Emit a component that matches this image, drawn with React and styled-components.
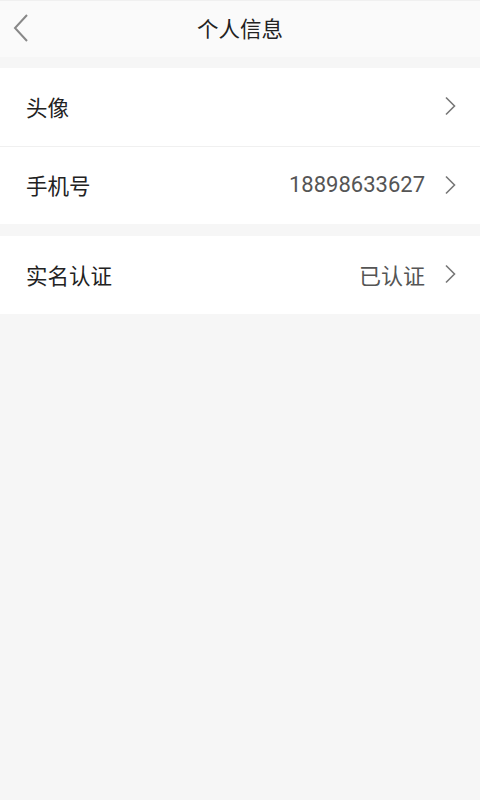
import React from "react";
import styled, { createGlobalStyle } from "styled-components";

const GlobalStyle = createGlobalStyle`
  html, body {
    margin: 0;
    padding: 0;
    background: #f6f6f6;
  }
  body {
    font-family: "Noto Sans CJK SC", "Noto Sans", Roboto, sans-serif;
  }
`;

const Page = styled.div`
  width: 480px;
  min-height: 800px;
  background: #f6f6f6;
  display: flex;
  flex-direction: column;
`;

const Header = styled.div`
  height: 56px;
  border-top: 1px solid #f0f0f0;
  background: #fafafa;
  position: relative;
  display: flex;
  align-items: center;
  justify-content: center;
  margin-bottom: 11px;
`;

const BackButton = styled.div`
  position: absolute;
  left: 12px;
  top: 11px;
  width: 20px;
  height: 32px;
  display: flex;
  align-items: center;
`;

const Title = styled.h1`
  margin: 0 0 4px;
  font-size: 21.5px;
  font-weight: 400;
  color: #222;
`;

const Group = styled.div`
  background: #fff;
  display: flex;
  flex-direction: column;
  margin-bottom: ${(p) => p.gap || 0}px;
`;

const Row = styled.div`
  height: 78px;
  box-sizing: border-box;
  display: flex;
  align-items: center;
  padding: 0 24px 2px 26px;
  border-top: ${(p) => (p.divider ? "1px solid #f0f0f0" : "none")};
`;

const Label = styled.span`
  font-size: 21.5px;
  color: #222;
  flex: 1;
`;

const Value = styled.span`
  font-size: 22px;
  color: #555;
  margin-right: 19px;
  font-family: Roboto, "Noto Sans CJK SC", sans-serif;
`;

const Chevron = () => (
  <svg width="12" height="20" viewBox="0 0 12 20">
    <path d="M2 1.5 L10.5 10 L2 18.5" fill="none" stroke="#777" strokeWidth="1.6" />
  </svg>
);

const BackIcon = () => (
  <svg width="18" height="30" viewBox="0 0 18 30">
    <path d="M15 2 L3 15 L15 28" fill="none" stroke="#888" strokeWidth="2" />
  </svg>
);

export default function App() {
  return (
    <Page>
      <GlobalStyle />
      <Header>
        <BackButton>
          <BackIcon />
        </BackButton>
        <Title>个人信息</Title>
      </Header>
      <Group gap={12}>
        <Row>
          <Label>头像</Label>
          <Chevron />
        </Row>
        <Row divider>
          <Label>手机号</Label>
          <Value>18898633627</Value>
          <Chevron />
        </Row>
      </Group>
      <Group>
        <Row>
          <Label>实名认证</Label>
          <Value>已认证</Value>
          <Chevron />
        </Row>
      </Group>
    </Page>
  );
}
